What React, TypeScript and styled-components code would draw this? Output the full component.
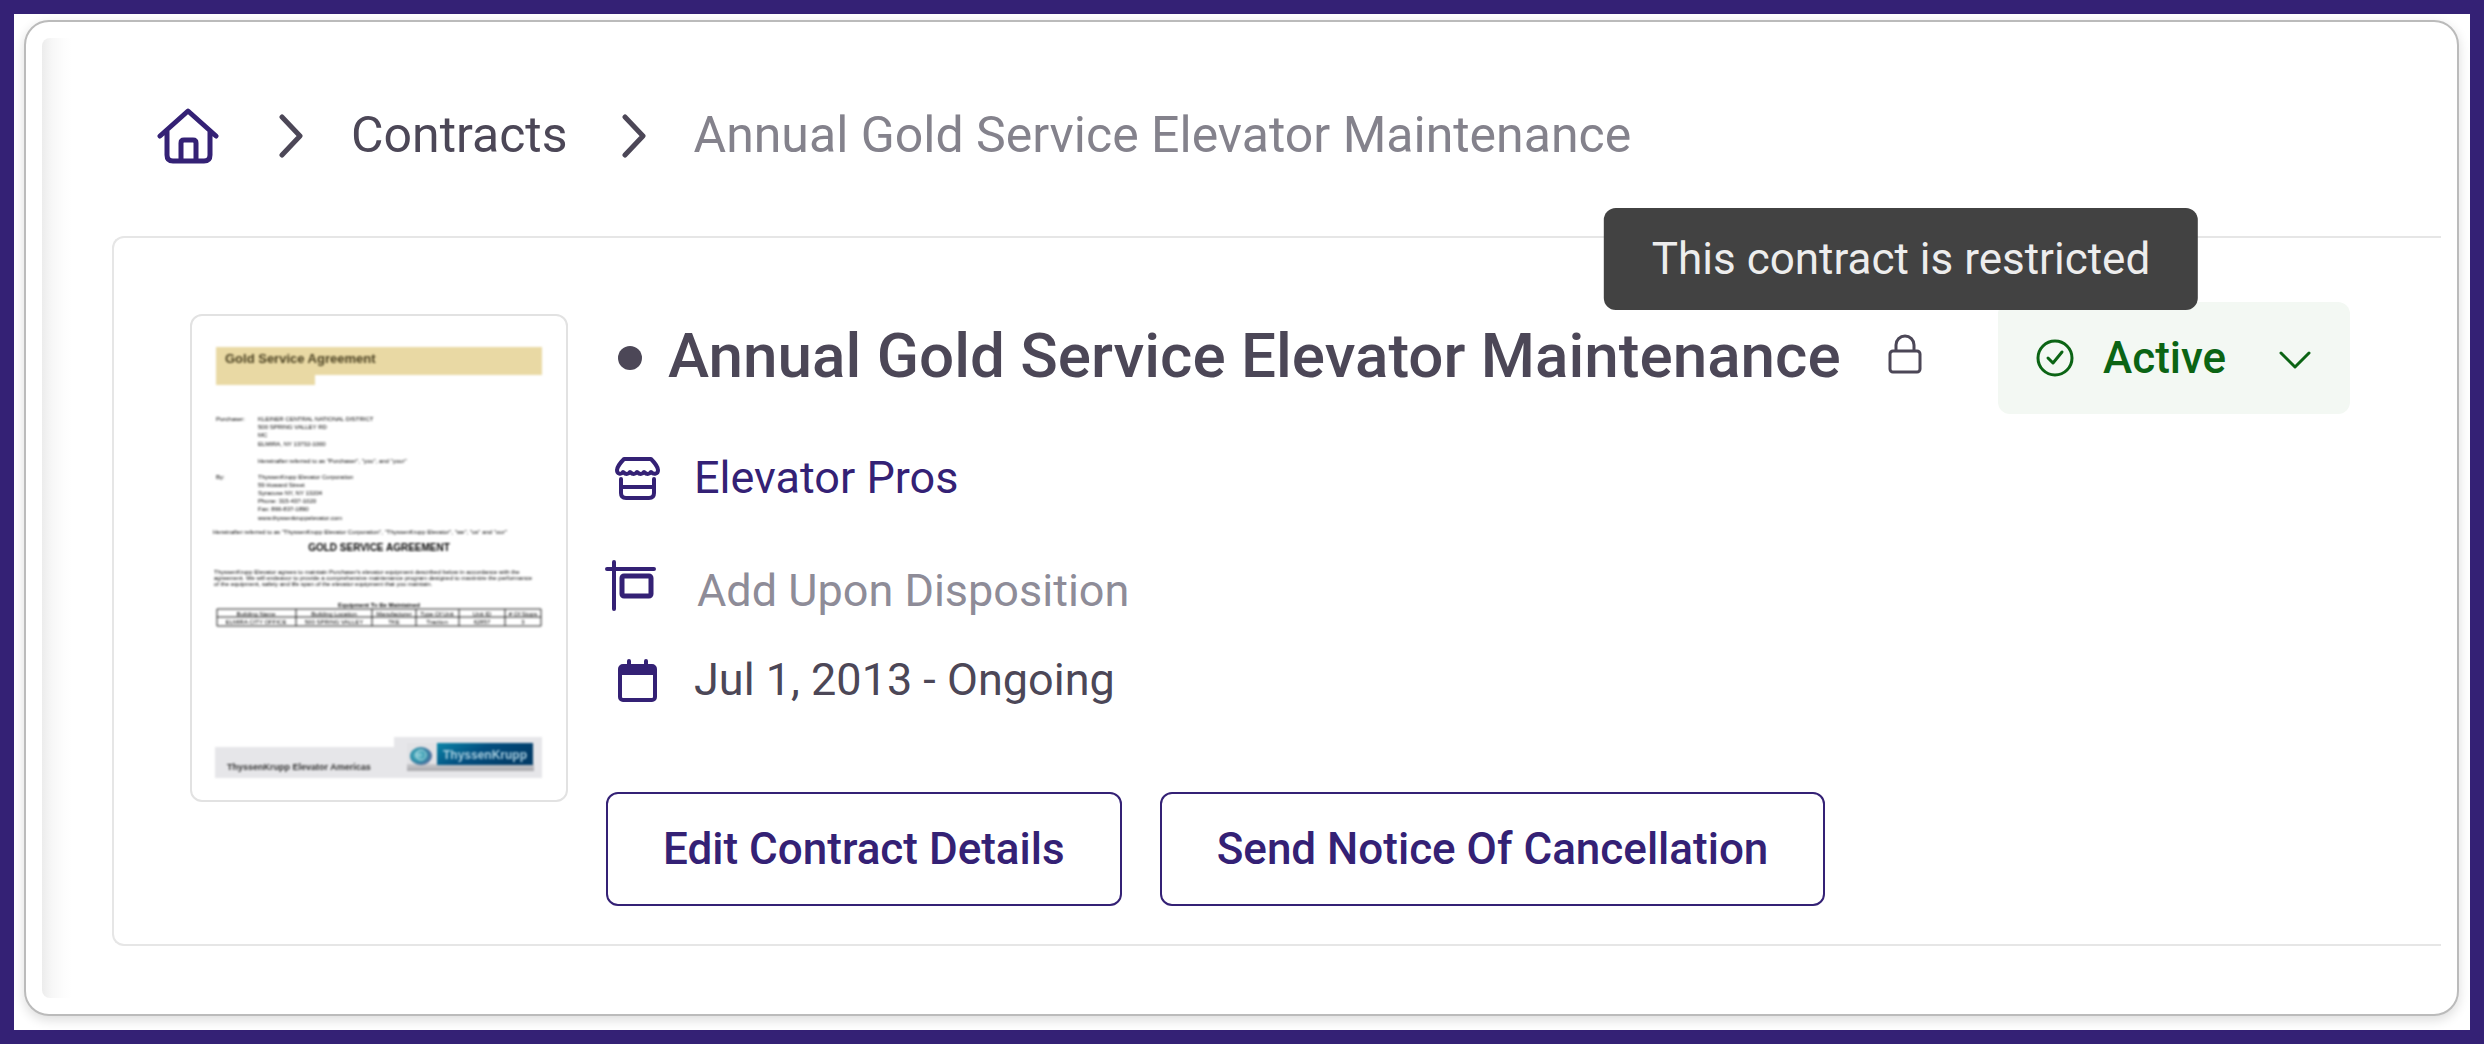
import React from 'react';
import styled, { createGlobalStyle } from 'styled-components';

const purple = '#342175';
const ink = '#4c4757';
const green = '#0b6414';

const GlobalStyle = createGlobalStyle`
  * { box-sizing: border-box; }
  body { margin: 0; background: ${purple}; font-family: Roboto, 'Liberation Sans', sans-serif; }
  h1, p, ol { margin: 0; padding: 0; }
`;

const Frame = styled.div`
  display: flex;
  min-height: 100vh;
  padding: 6px 11px 14px 10px;
  border: 14px solid ${purple};
  background: #fff;
`;

const Window = styled.div`
  display: flex;
  flex: 1;
  padding: 16px;
  border: 2px solid #bbb;
  border-radius: 25px;
  background: #fff;
  box-shadow: 0 4px 12px rgba(0, 0, 0, 0.14);
`;

const Page = styled.main`
  flex: 1;
  min-width: 0;
  padding-left: 70px;
  border-radius: 8px 0 0 8px;
  background: linear-gradient(90deg, #ececec 0, #f7f7f7 10px, #fdfdfd 22px, #fff 30px);
`;

const Breadcrumb = styled.nav`
  ol { display: flex; align-items: center; height: 198px; padding: 0 0 2px 45px; list-style: none; }
  li { display: flex; align-items: center; }
`;

const HomeLink = styled.a`
  display: flex;
  width: 68px;
`;

const Separator = styled.svg`
  width: 24px;
  height: 44px;
  margin: 0 48px 0 54px;
`;

const Crumb = styled.a<{ $current?: boolean }>`
  padding-bottom: 2px;
  color: ${(p) => (p.$current ? '#84828c' : ink)};
  font-size: 50px;
  line-height: 60px;
  text-decoration: none;
  white-space: nowrap;
`;

const Card = styled.section`
  display: flex;
  align-items: flex-start;
  gap: 38px;
  padding: 76px 91px 38px 76px;
  border: 2px solid #e6e6e6;
  border-right: 0;
  border-radius: 12px 0 0 12px;
  background: #fff;
`;

const Preview = styled.svg`
  flex: none;
  width: 378px;
  height: 488px;
  border: 2px solid #e2e2e2;
  border-radius: 12px;
  font-family: 'Liberation Sans', sans-serif;
`;

const Details = styled.div`
  flex: 1;
  min-width: 0;
`;

const TitleRow = styled.div`
  display: flex;
  align-items: center;
  height: 112px;
  margin-top: -12px;
`;

const Bullet = styled.span`
  width: 24px;
  height: 24px;
  margin: 0 26px 0 12px;
  border-radius: 50%;
  background: ${ink};
`;

const Title = styled.h1`
  padding-bottom: 4px;
  color: ${ink};
  font-size: 62px;
  font-weight: 500;
  line-height: 72px;
  white-space: nowrap;
`;

const LockAnchor = styled.span`
  position: relative;
  display: flex;
  margin-left: 46px;
`;

const Tooltip = styled.span`
  position: absolute;
  z-index: 1;
  bottom: 72px;
  left: 40%;
  transform: translateX(-50%);
  padding: 24px 48px;
  border-radius: 12px;
  background: #424242;
  color: #ededed;
  font-size: 44px;
  line-height: 54px;
  white-space: nowrap;
`;

const Status = styled.button`
  display: flex;
  align-items: center;
  width: 352px;
  height: 112px;
  margin-left: auto;
  padding: 0 38px;
  border: 0;
  border-radius: 12px;
  background: #f3f8f3;
  color: ${green};
  font: 500 44px/56px Roboto, 'Liberation Sans', sans-serif;
`;

const StatusText = styled.span`
  flex: 1;
  margin-left: 27px;
  text-align: left;
`;

const Facts = styled.div`
  display: grid;
  gap: 29px;
  padding: 34px 0 82px;
`;

const Fact = styled.p<{ $muted?: boolean }>`
  display: flex;
  align-items: center;
  gap: ${(p) => (p.$muted ? '31px' : '28px')};
  padding-top: ${(p) => (p.$muted ? '24px' : '0')};
  color: ${(p) => (p.$muted ? '#8e8c98' : ink)};
  font-size: 45px;
  line-height: 60px;
  a { color: ${purple}; text-decoration: none; }
`;

const FactIcon = styled.svg`
  flex: none;
  width: 60px;
  height: 60px;
  overflow: visible;
  fill: none;
  stroke: ${purple};
  stroke-linecap: round;
  stroke-linejoin: round;
`;

const Actions = styled.div`
  display: flex;
  gap: 38px;
`;

const Action = styled.button`
  height: 114px;
  padding: 0 55px;
  border: 2px solid ${purple};
  border-radius: 12px;
  background: #fff;
  color: ${purple};
  font: 500 44px/56px Roboto, 'Liberation Sans', sans-serif;
`;

const Soft = styled.g<{ $radius: number }>`
  filter: blur(${(p) => p.$radius}px);
`;

const Chevron = () => (
  <Separator viewBox="0 0 24 44" fill="none" stroke={ink} strokeWidth="5" strokeLinecap="round" strokeLinejoin="round" aria-hidden>
    <path d="M3 3 21 22 3 41" />
  </Separator>
);

const letterLines: [number, number, string][] = [
  [216, 421, 'Purchaser:'],
  [258, 421, 'KLEINER CENTRAL NATIONAL DISTRICT'],
  [258, 429, '500 SPRING VALLEY RD'],
  [258, 437, 'MC'],
  [258, 446, 'ELMIRA, NY 13732-1000'],
  [258, 463, 'Hereinafter referred to as "Purchaser", "you", and "your"'],
  [216, 479, 'By:'],
  [258, 479, 'ThyssenKrupp Elevator Corporation'],
  [258, 487, '59 Howard Street'],
  [258, 495, 'Syracuse NY, NY 13204'],
  [258, 503, 'Phone: 315-437-1020'],
  [258, 511, 'Fax: 866-837-1890'],
  [258, 520, 'www.thyssenkruppelevator.com'],
  [213, 534, 'Hereinafter referred to as "ThyssenKrupp Elevator Corporation", "ThyssenKrupp Elevator", "we", "us" and "our"'],
  [214, 574, 'ThyssenKrupp Elevator agrees to maintain Purchaser\'s elevator equipment described below in accordance with the'],
  [214, 580, 'agreement. We will endeavor to provide a comprehensive maintenance program designed to maximize the performance'],
  [214, 586, 'of the equipment, safety and life span of the elevator equipment that you maintain.'],
];

const tableCells: [number, string, string][] = [
  [256, 'Building Name', 'ELMIRA CITY OFFICE'],
  [334, 'Building Location', '500 SPRING VALLEY'],
  [394, 'Manufacturer', 'TKE'],
  [437, 'Type Of Unit', 'Traction'],
  [482, 'Unit ID', '62857'],
  [523, '# Of Stops', '3'],
];

const DocumentPreview = () => (
  <Preview viewBox="192 316 374 484" role="img" aria-label="Gold Service Agreement preview">
    <defs>
      <linearGradient id="brand" x1="0" y1="0" x2="1" y2="0.4">
        <stop offset="0" stopColor="#0b86a8" />
        <stop offset="0.5" stopColor="#034f80" />
        <stop offset="1" stopColor="#023c68" />
      </linearGradient>
      <radialGradient id="seal" cx="0.4" cy="0.45" r="0.6">
        <stop offset="0" stopColor="#8fd0da" />
        <stop offset="0.55" stopColor="#2c93ab" />
        <stop offset="1" stopColor="#54699b" />
      </radialGradient>
      <linearGradient id="plate" x1="0" y1="0" x2="0" y2="1">
        <stop offset="0" stopColor="#e8e8ea" />
        <stop offset="0.7" stopColor="#d0d0d3" />
        <stop offset="1" stopColor="#a9a9ad" />
      </linearGradient>
    </defs>
    <Soft $radius={1}>
      <path d="M216 347H542V375H315V385H216Z" fill="#e9d9a4" />
      <text x="225" y="363" fontSize="13" fontWeight="700" fill="#4a4020">Gold Service Agreement</text>
      <g fontSize="6" fill="#000">
        {letterLines.map(([x, y, line]) => <text key={`${x}-${y}`} x={x} y={y}>{line}</text>)}
        <text x="379" y="607" textAnchor="middle" fontWeight="700">Equipment To Be Maintained</text>
        {tableCells.map(([x, head, value]) => (
          <React.Fragment key={head}>
            <text x={x} y="616" textAnchor="middle">{head}</text>
            <text x={x} y="624" textAnchor="middle">{value}</text>
          </React.Fragment>
        ))}
      </g>
      <text x="379" y="551" textAnchor="middle" fontSize="10" fontWeight="700" fill="#000">GOLD SERVICE AGREEMENT</text>
      <path d="M217 609H541V626H217ZM217 617H541M296 609V626M372 609V626M416 609V626M459 609V626M505 609V626" fill="none" stroke="#222" strokeWidth="1" />
      <path d="M215 747H394V737H542V778H215Z" fill="#e6e6e9" />
      <text x="227" y="770" fontSize="9" fontWeight="700" fill="#333">ThyssenKrupp Elevator Americas</text>
      <rect x="407" y="743" width="127" height="28" fill="url(#plate)" />
      <path d="M407 743H534V764H407Z" fill="#e2e2e5" />
      <ellipse cx="421" cy="756" rx="11" ry="9" fill="url(#seal)" />
      <ellipse cx="421" cy="755" rx="5" ry="5" fill="none" stroke="#c7e6ea" strokeWidth="1" />
      <rect x="437" y="743" width="96" height="22" fill="url(#brand)" />
      <text x="443" y="759" fontSize="12" fontWeight="700" fill="#a9cfe0">ThyssenKrupp</text>
    </Soft>
  </Preview>
);

export default function App() {
  return (
    <>
      <GlobalStyle />
      <Frame>
        <Window>
          <Page>
            <Breadcrumb aria-label="Breadcrumb">
              <ol>
                <li>
                  <HomeLink href="#" aria-label="Home">
                    <svg width="62" height="58" viewBox="0 0 62 58" fill="none" stroke={purple} strokeWidth="5" strokeLinecap="round" strokeLinejoin="round">
                      <path d="M3 29 31 4 59 29M10 24V48Q10 54 16 54H47Q53 54 53 48V24M24 54V36Q24 33 27 33H36Q39 33 39 36V54" />
                    </svg>
                  </HomeLink>
                </li>
                <li><Chevron /><Crumb href="#">Contracts</Crumb></li>
                <li><Chevron /><Crumb as="span" $current aria-current="page">Annual Gold Service Elevator Maintenance</Crumb></li>
              </ol>
            </Breadcrumb>
            <Card>
              <DocumentPreview />
              <Details>
                <TitleRow>
                  <Bullet />
                  <Title>Annual Gold Service Elevator Maintenance</Title>
                  <LockAnchor>
                    <svg width="36" height="48" viewBox="0 0 36 48" fill="none" stroke={ink} strokeWidth="3" aria-hidden>
                      <rect x="3" y="17" width="30" height="21" rx="3" />
                      <path d="M9 17V11A9 9 0 0 1 27 11V17" />
                    </svg>
                    <Tooltip role="tooltip">This contract is restricted</Tooltip>
                  </LockAnchor>
                  <Status type="button" aria-haspopup="listbox">
                    <svg width="40" height="40" viewBox="0 0 40 40" fill="none" stroke={green} strokeWidth="3" strokeLinecap="round" strokeLinejoin="round" aria-hidden>
                      <circle cx="19" cy="20" r="17" />
                      <path d="M12 20 17 25 26 14" />
                    </svg>
                    <StatusText>Active</StatusText>
                    <svg width="33" height="24" viewBox="0 0 33 24" fill="none" stroke={green} strokeWidth="3" strokeLinecap="round" strokeLinejoin="round" aria-hidden>
                      <path d="M2 7 16 21 30 7" />
                    </svg>
                  </Status>
                </TitleRow>
                <Facts>
                  <Fact>
                    <FactIcon viewBox="0 0 60 60" strokeWidth="4" aria-hidden>
                      <path d="M18 11H45C47 13 52 19 52 22C52 26 48 27 45 24Q42 28 38 24Q35 28 31 24Q28 28 24 24Q21 28 17 24C15 27 11 26 11 22C11 19 16 13 18 11Z" />
                      <path d="M15 31V45Q15 50 20 50H43Q48 50 48 45V31M15 39H48" />
                    </FactIcon>
                    <a href="#">Elevator Pros</a>
                  </Fact>
                  <Fact $muted>
                    <FactIcon viewBox="0 0 60 60" strokeWidth="4" aria-hidden>
                      <path d="M1 8H48M8 1V48" />
                      <rect x="16" y="15" width="29" height="20" rx="2" strokeWidth="5" />
                    </FactIcon>
                    Add Upon Disposition
                  </Fact>
                  <Fact>
                    <FactIcon viewBox="0 0 60 60" strokeWidth="4" aria-hidden>
                      <rect x="14" y="16" width="35" height="34" rx="3" />
                      <path d="M14 17H49V24H14Z" fill={purple} strokeWidth="2" />
                      <path d="M23 11V16M40 11V16" />
                    </FactIcon>
                    Jul 1, 2013 - Ongoing
                  </Fact>
                </Facts>
                <Actions>
                  <Action type="button">Edit Contract Details</Action>
                  <Action type="button">Send Notice Of Cancellation</Action>
                </Actions>
              </Details>
            </Card>
          </Page>
        </Window>
      </Frame>
    </>
  );
}
